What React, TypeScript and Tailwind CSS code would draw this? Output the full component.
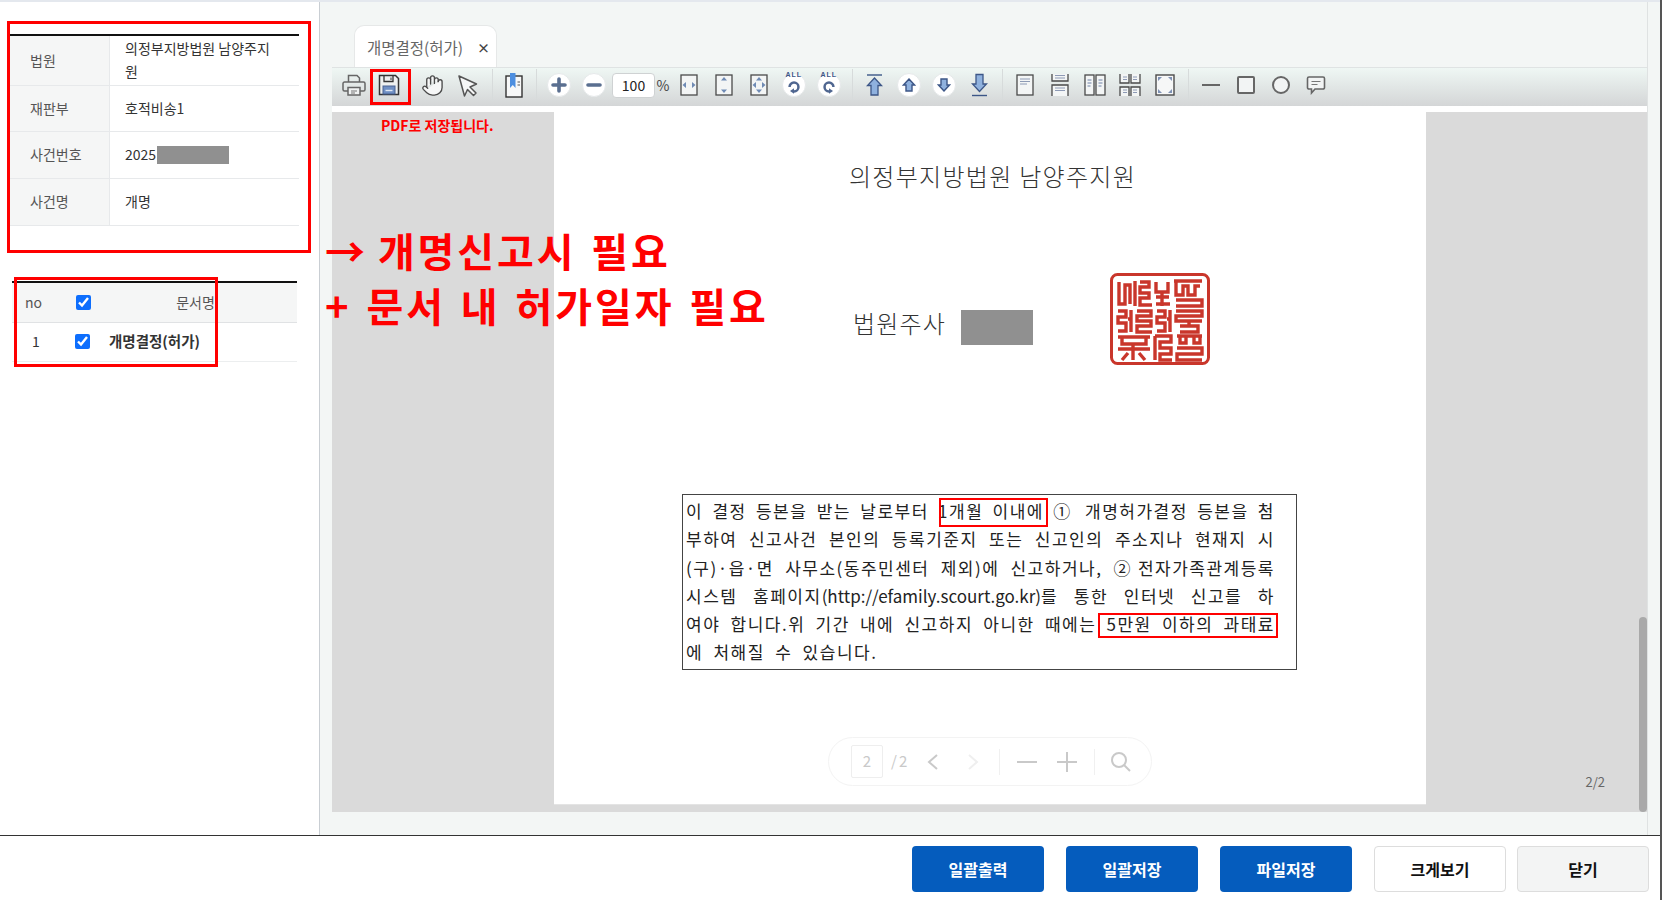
import { Hand } from "lucide-react"
import type { ReactNode } from "react"

const ink = "#4a4a4a"
const blue = "#8fb1de"
const navy = "#3c5687"

function Cell({ children, className = "" }: { children: ReactNode; className?: string }) {
  return <div className={`w-[35px] h-full flex items-center justify-center shrink-0 ${className}`}>{children}</div>
}

function Sep({ className = "" }: { className?: string }) {
  return <div className={`w-px h-[32px] bg-[#d7dbdb] shrink-0 ${className}`} />
}

function Round({ children }: { children: ReactNode }) {
  return (
    <div className="w-[24px] h-[24px] rounded-full bg-white border border-[#e6e9ea] flex items-center justify-center">
      {children}
    </div>
  )
}

function Svg({ children, w = 24, h = 24 }: { children: ReactNode; w?: number; h?: number }) {
  return (
    <svg width={w} height={h} viewBox={`0 0 ${w} ${h}`} fill="none">
      {children}
    </svg>
  )
}

function PrinterIcon() {
  return (
    <Svg>
      <path d="M6.5 9V2.5h8.5l2.5 2.5V9" stroke="#666" strokeWidth="1.5" />
      <path d="M6 18H2.5a1.5 1.5 0 0 1-1.5-1.5v-6A1.5 1.5 0 0 1 2.5 9h19a1.5 1.5 0 0 1 1.5 1.5v6a1.5 1.5 0 0 1-1.5 1.5H18" stroke="#666" strokeWidth="1.5" />
      <path d="M6 14.5h12v7.5H6z" stroke="#666" strokeWidth="1.5" fill="#f0f2f2" />
      <path d="M9 18h6M9 20h4" stroke="#777" />
    </Svg>
  )
}

function SaveIcon() {
  return (
    <Svg>
      <path d="M2.5 2.5h16l3 3v16h-19z" stroke="#333" strokeWidth="1.5" fill="#eef0f0" />
      <path d="M7 3v5.5h9V3" stroke="#333" strokeWidth="1.3" />
      <path d="M14 4.5V7" stroke="#333" />
      <rect x="6" y="13" width="12" height="8" fill="#6f8fc4" stroke="#4a6391" />
      <path d="M8.5 17.5h7" stroke="#dfe7f4" strokeWidth="1.4" />
    </Svg>
  )
}

function PointerIcon() {
  return (
    <Svg>
      <path d="M3 3l17.5 8-6.5 3 6 6-2.5 2.5-6-6-3 6.5z" stroke="#555" strokeWidth="1.5" strokeLinejoin="round" fill="#f6f7f7" />
    </Svg>
  )
}

function BookmarkIcon() {
  return (
    <Svg w={20} h={26}>
      <rect x="2" y="4" width="16" height="21" fill="#f7f8f8" stroke="#333" strokeWidth="1.4" />
      <path d="M6 1h5.5v15L8.8 13 6 16z" fill="#4d8fe0" />
      <path d="M13.5 10h2.5M13.5 13h2.5" stroke="#555" />
    </Svg>
  )
}

function PlusIcon() {
  return (
    <Svg w={16} h={16}>
      <path d="M8 2v12M2 8h12" stroke="#5a6f90" strokeWidth="3.6" strokeLinecap="round" />
    </Svg>
  )
}

function MinusIcon() {
  return (
    <Svg w={16} h={16}>
      <path d="M2 8h12" stroke="#5a6f90" strokeWidth="3.6" strokeLinecap="round" />
    </Svg>
  )
}

function Frame({ children }: { children?: ReactNode }) {
  return (
    <Svg w={18} h={22}>
      <rect x="1" y="1" width="16" height="20" fill="#f3f5f5" stroke={ink} strokeWidth="1.3" />
      {children}
    </Svg>
  )
}

function ArrowH() {
  return <path d="M2.5 11l3.5-3v6zM15.5 11l-3.5-3v6z" fill="#6f8bb5" />
}

function ArrowV() {
  return <path d="M9 3l-3 3.5h6zM9 19l-3-3.5h6z" fill="#6f8bb5" />
}

function AllRotate({ flip }: { flip?: boolean }) {
  return (
    <div className="relative">
      <Round>
        <svg width="16" height="16" viewBox="0 0 18 18" fill="none" className={flip ? "-scale-x-100 mt-[3px]" : "mt-[3px]"}>
          <path d="M4 9a5 5 0 1 1 5 5" stroke="#4f6690" strokeWidth="2.8" />
          <path d="M9 10.5v6l-4.5-3z" fill="#4f6690" />
        </svg>
      </Round>
      <span className="absolute -top-[2px] left-[4px] text-[7px] leading-[8px] font-bold tracking-[1px] text-[#3c5687] font-['Liberation_Sans',sans-serif]">
        ALL
      </span>
    </div>
  )
}

function ArrowFirst() {
  return (
    <Svg>
      <path d="M5 2h15" stroke={navy} strokeWidth="1.4" />
      <path d="M12.5 5l7 7.5h-3.5v9.5H9v-9.5H5.5z" fill={blue} stroke={navy} strokeWidth="1.3" />
    </Svg>
  )
}

function ArrowLast() {
  return (
    <Svg>
      <path d="M5 22.5h15" stroke={navy} strokeWidth="1.4" />
      <path d="M9 1.5h7V11h3.5l-7 7.5-7-7.5H9z" fill={blue} stroke={navy} strokeWidth="1.3" />
    </Svg>
  )
}

function ArrowUp() {
  return (
    <Svg w={14} h={14}>
      <path d="M7 1l5.5 6H10v6H4V7H1.5z" fill={blue} stroke={navy} strokeWidth="1.4" />
    </Svg>
  )
}

function ArrowDown() {
  return (
    <Svg w={14} h={14}>
      <path d="M4 1h6v6h2.5L7 13 1.5 7H4z" fill={blue} stroke={navy} strokeWidth="1.4" />
    </Svg>
  )
}

function TextLines({ x, y, w }: { x: number; y: number; w: number }) {
  return (
    <path
      d={`M${x} ${y}h${w}M${x} ${y + 2.5}h${w}M${x} ${y + 5}h${w * 0.7}`}
      stroke="#8d9ab5"
      strokeWidth="1"
    />
  )
}

function SinglePage() {
  return (
    <Frame>
      <TextLines x={4} y={5} w={10} />
    </Frame>
  )
}

function ContinuousPage() {
  return (
    <Svg w={20} h={24}>
      <path d="M2 1v7h16V1" stroke={ink} strokeWidth="1.3" fill="#f3f5f5" />
      <path d="M2 23v-11h16v11" stroke={ink} strokeWidth="1.3" fill="#f3f5f5" />
      <path d="M5 2.5h10M5 5h10M5 15h10M5 17.5h10" stroke="#8d9ab5" />
    </Svg>
  )
}

function TwoPages() {
  return (
    <Svg w={22} h={22}>
      <rect x="1" y="1" width="9" height="20" fill="#f3f5f5" stroke={ink} strokeWidth="1.3" />
      <rect x="12" y="1" width="9" height="20" fill="#f3f5f5" stroke={ink} strokeWidth="1.3" />
      <path d="M3.5 6h4M3.5 9h4M3.5 12h3M14.5 6h4M14.5 9h4M14.5 12h3" stroke="#6f82a8" />
    </Svg>
  )
}

function FourPages() {
  return (
    <Svg w={24} h={24}>
      <path d="M2 1v9h9V1M13 1v9h9V1" stroke={ink} strokeWidth="1.3" fill="#f3f5f5" />
      <path d="M2 23v-9h9v9M13 23v-9h9v9" stroke={ink} strokeWidth="1.3" fill="#f3f5f5" />
      <path d="M5 4h4M5 6.5h4M15 4h4M15 6.5h4M5 17h4M5 19.5h4M15 17h4M15 19.5h4" stroke="#8d9ab5" />
    </Svg>
  )
}

function FullScreen() {
  return (
    <Svg w={20} h={22}>
      <rect x="1" y="1" width="18" height="20" fill="#f6f7f7" stroke={ink} strokeWidth="1.4" />
      <path d="M3 3h4L3 7zM17 3h-4l4 4zM3 19h4l-4-4zM17 19h-4l4-4z" fill="#7e92b5" />
    </Svg>
  )
}

function Toolbar() {
  return (
    <div className="h-[39px] border-t border-[#dfe3e3] bg-gradient-to-b from-[#eff7f4] to-[#d4d6d7] flex items-center pl-[4px] pb-[4px]">
      <Cell><PrinterIcon /></Cell>
      <Cell><SaveIcon /></Cell>
      <Cell className="ml-[9px]"><Hand size={23} strokeWidth={1.4} color="#4a4a4a" fill="#f6f7f7" /></Cell>
      <Cell><PointerIcon /></Cell>
      <Sep className="ml-[7px]" />
      <Cell className="ml-[3px]"><BookmarkIcon /></Cell>
      <Sep className="ml-[5px]" />
      <Cell className="ml-[4px]"><Round><PlusIcon /></Round></Cell>
      <Cell><Round><MinusIcon /></Round></Cell>
      <div className="ml-[1px] w-[43px] h-[25px] rounded-[4px] bg-white border border-[#cfd2d3] text-[14px] text-[#222] flex items-center justify-center">100</div>
      <div className="w-[16px] text-[14px] text-[#444] text-center">%</div>
      <Cell><Frame><ArrowH /></Frame></Cell>
      <Cell><Frame><ArrowV /></Frame></Cell>
      <Cell><Frame><ArrowH /><ArrowV /></Frame></Cell>
      <Cell><AllRotate /></Cell>
      <Cell><AllRotate flip /></Cell>
      <Sep className="ml-[6px]" />
      <Cell className="ml-[3px]"><ArrowFirst /></Cell>
      <Cell><Round><ArrowUp /></Round></Cell>
      <Cell><Round><ArrowDown /></Round></Cell>
      <Cell><ArrowLast /></Cell>
      <Sep className="ml-[6px]" />
      <Cell className="ml-[4px]"><SinglePage /></Cell>
      <Cell><ContinuousPage /></Cell>
      <Cell><TwoPages /></Cell>
      <Cell><FourPages /></Cell>
      <Cell><FullScreen /></Cell>
      <Sep className="ml-[6px]" />
      <Cell className="ml-[4px]">
        <div className="w-[18px] h-[2px] bg-[#666]" />
      </Cell>
      <Cell>
        <div className="w-[18px] h-[18px] rounded-[2px] border-2 border-[#666] bg-[#f2f4f4]" />
      </Cell>
      <Cell>
        <div className="w-[18px] h-[18px] rounded-full border-2 border-[#666] bg-[#f2f4f4]" />
      </Cell>
      <Cell>
        <Svg w={20} h={20}>
          <path d="M3 2h14a1.5 1.5 0 0 1 1.5 1.5v9A1.5 1.5 0 0 1 17 14H9l-3.5 4v-4H3a1.5 1.5 0 0 1-1.5-1.5v-9A1.5 1.5 0 0 1 3 2z" stroke="#666" strokeWidth="1.6" fill="#f2f4f4" />
          <path d="M5.5 6.5h9M5.5 9.5h6" stroke="#777" />
        </Svg>
      </Cell>
    </div>
  )
}

const sealPaths = [
  // top row
  "M9 9v22h6V12h5v19M25 8v25M30 9h9v5h-9v6h9v5h-9v7h12M46 9v10h12V9M46 24h13M52 19v14M46 31h14M64 8h28M66 8v14h7V13h5v9h7V13h5M66 27h26v6H66",
  // middle row
  "M8 38h8v6H8v6h8v8H8M21 37v22M21 46h-3M27 38h14v5H27v5h14v5H27v6h15M47 38h8v6h-8v6h8v8h-8M60 37v22M60 46h-3M66 38h26v5H66v5h26M70 53h18v6H70M79 48v5",
  // bottom row
  "M8 64h32M12 64v7h24v-7M8 76h32M23 71v16M12 87l6-7M35 87l-6-7M45 63v24M45 63h16v6H50v6h11v6H50v6h12M67 63h25M70 63v7h6v-7M84 63v7h6v-7M67 75h25v6H67v6h25",
]

function Seal() {
  return (
    <svg width="100" height="92" viewBox="0 0 100 92" fill="none">
      <rect x="1.5" y="1.5" width="97" height="89" rx="6" stroke="#c9362b" strokeWidth="3" />
      {sealPaths.map((d, i) => (
        <path key={i} d={d} stroke="#c9362b" strokeWidth="3.4" />
      ))}
    </svg>
  )
}

function Pager() {
  return (
    <div className="absolute left-[274px] top-[625px] w-[324px] h-[49px] rounded-full bg-white border border-[#f3f3f3] flex items-center pl-[22px] text-[#c9c9c9]">
      <div className="w-[32px] h-[33px] border border-[#eeeeee] rounded-[2px] flex items-center justify-center text-[15px]">2</div>
      <span className="ml-[8px] w-[20px] text-[15px] tracking-[2px]">/2</span>
      <svg width="16" height="18" viewBox="0 0 16 18" fill="none" className="ml-[14px]">
        <path d="M12 2L4 9l8 7" stroke="#c9c9c9" strokeWidth="2" />
      </svg>
      <svg width="16" height="18" viewBox="0 0 16 18" fill="none" className="ml-[24px]">
        <path d="M4 2l8 7-8 7" stroke="#efefef" strokeWidth="2" />
      </svg>
      <div className="ml-[18px] w-px h-[26px] bg-[#f0f0f0]" />
      <div className="ml-[17px] w-[20px] h-[2px] bg-[#c9c9c9]" />
      <svg width="20" height="20" viewBox="0 0 20 20" fill="none" className="ml-[20px]">
        <path d="M10 0v20M0 10h20" stroke="#c9c9c9" strokeWidth="2" />
      </svg>
      <div className="ml-[17px] w-px h-[26px] bg-[#f0f0f0]" />
      <svg width="22" height="22" viewBox="0 0 22 22" fill="none" className="ml-[15px]">
        <circle cx="9" cy="9" r="7" stroke="#c9c9c9" strokeWidth="2" />
        <path d="M14 14l6 6" stroke="#c9c9c9" strokeWidth="2" />
      </svg>
    </div>
  )
}

function NoticeLine({ children }: { children: ReactNode }) {
  return <div className="text-justify [text-align-last:justify] whitespace-nowrap tracking-[1.5px]">{children}</div>
}

function DocumentPage() {
  return (
    <div className="relative w-[872px] h-[693px] shrink-0 bg-white border-b border-[#e4e4e4]">
      <div className="pt-[48px] pl-[5px] text-center text-[24px] leading-[32px] tracking-[1.3px] text-[#333] font-light">
        의정부지방법원 남양주지원
      </div>
      <div className="mt-[81px] pl-[299px] flex items-start">
        <div className="mt-[34px] w-[108px] text-[24px] leading-[32px] tracking-[1.2px] text-[#333] font-light">법원주사</div>
        <div className="mt-[37px] w-[72px] h-[35px] bg-[#909090]" />
        <div className="ml-[77px]"><Seal /></div>
      </div>
      <div className="relative mt-[129px] ml-[128px] w-[615px] h-[176px] border border-[#444] pl-[3px] pr-[21px] pt-[2px] text-[17px] leading-[28.3px] text-[#222]">
        <NoticeLine>이 결정 등본을 받는 날로부터 1개월 이내에 ① 개명허가결정 등본을 첨</NoticeLine>
        <NoticeLine>부하여 신고사건 본인의 등록기준지 또는 신고인의 주소지나 현재지 시</NoticeLine>
        <NoticeLine>(구)·읍·면 사무소(동주민센터 제외)에 신고하거나, ②전자가족관계등록</NoticeLine>
        <NoticeLine>
          시스템 홈페이지<span className="tracking-normal">(http://efamily.scourt.go.kr)</span>를 통한 인터넷 신고를 하
        </NoticeLine>
        <NoticeLine>여야 합니다.위 기간 내에 신고하지 아니한 때에는 5만원 이하의 과태료</NoticeLine>
        <div className="[word-spacing:5px] tracking-[1.5px]">에 처해질 수 있습니다.</div>
        <div className="absolute left-[256px] top-[3px] w-[109px] h-[29px] border-2 border-[#ff0000]" />
        <div className="absolute left-[415px] top-[118px] w-[180px] h-[25px] border-2 border-[#ff0000]" />
      </div>
      <Pager />
    </div>
  )
}

function InfoRow({ label, children, h }: { label: string; children: ReactNode; h: string }) {
  return (
    <div className={`flex border-b border-[#e7e9eb] ${h}`}>
      <div className="w-[100px] shrink-0 bg-[#f5f6f6] border-r border-[#e7e9eb] pl-[20px] pb-[1px] flex items-center text-[14px] text-[#555]">
        {label}
      </div>
      <div className="flex-1 pl-[15px] pr-[22px] pb-[1px] flex items-center text-[14px] leading-[23px] text-[#333] break-all">
        {children}
      </div>
    </div>
  )
}

function Sidebar() {
  return (
    <aside className="w-[320px] shrink-0 bg-white border-r border-[#c9ced3] pt-[32px]">
      <div className="ml-[10px] w-[289px] border-t-2 border-[#111]">
        <InfoRow label="법원" h="h-[50px]">의정부지방법원 남양주지원</InfoRow>
        <InfoRow label="재판부" h="h-[46px]">호적비송1</InfoRow>
        <InfoRow label="사건번호" h="h-[47px]">
          <span className="flex items-center whitespace-nowrap">
            2025<span className="ml-[1px] w-[72px] h-[18px] bg-[#909090]" />
          </span>
        </InfoRow>
        <InfoRow label="사건명" h="h-[47px]">개명</InfoRow>
      </div>
      <div className="mt-[55px] ml-[12px] w-[285px] border-t-2 border-[#111] text-[14px]">
        <div className="h-[40px] flex items-center bg-[#f5f6f6] border-b border-[#e0e2e4] text-[#555]">
          <div className="w-[43px] text-center">no</div>
          <div className="w-[55px] flex justify-center pl-[2px]">
            <input type="checkbox" defaultChecked className="w-[15px] h-[15px] accent-[#0d6efd]" />
          </div>
          <div className="flex-1 text-center pr-[16px]">문서명</div>
        </div>
        <div className="h-[39px] pb-[2px] flex items-center border-b border-[#eceeef] text-[#333]">
          <div className="w-[48px] text-center">1</div>
          <div className="w-[44px] flex justify-center">
            <input type="checkbox" defaultChecked className="w-[15px] h-[15px] accent-[#0d6efd]" />
          </div>
          <div className="ml-[5px] font-bold text-[14.5px]">개명결정(허가)</div>
        </div>
      </div>
    </aside>
  )
}

function Viewer() {
  return (
    <main className="flex-1 min-w-0 bg-[#f3f6f5] pl-[12px] flex flex-col">
      <div className="border-r border-[#dfe2e2] mr-[12px] flex-1 flex flex-col">
        <div className="pt-[23px] pl-[22px]">
          <div className="w-[143px] h-[42px] rounded-t-[10px] bg-white border border-b-0 border-[#e6e8e8] flex items-center pl-[12px] pt-[3px] text-[15.5px] text-[#666]">
            개명결정(허가)
            <span className="ml-[14px] text-[13px] font-bold text-[#444]">×</span>
          </div>
        </div>
        <Toolbar />
        <div className="h-[6px] bg-white" />
        <div className="h-[700px] bg-[#dadada] flex items-start pl-[222px]">
          <DocumentPage />
          <div className="flex-1 h-full flex justify-end items-end pb-[21px] pr-[34px] text-[13px] text-[#666]">2/2</div>
          <div className="w-[8px] h-[195px] self-end bg-[#a9a9a9] rounded-[4px]" />
        </div>
      </div>
    </main>
  )
}

function FooterButton({ label, tone, className = "" }: { label: string; tone: "blue" | "white" | "gray"; className?: string }) {
  const tones = {
    blue: "bg-[#055cbd] text-white",
    white: "bg-white text-[#111] border border-[#dddddd]",
    gray: "bg-[#f3f4f4] text-[#111] border border-[#dddddd]",
  }
  return (
    <button className={`w-[132px] h-[46px] rounded-[4px] text-[16px] font-bold ${tones[tone]} ${className}`}>
      {label}
    </button>
  )
}

export default function App() {
  return (
    <div className="relative w-full h-screen flex overflow-hidden bg-white font-['Noto_Sans_CJK_KR','Noto_Sans',sans-serif]">
      <div className="flex-1 min-w-0 flex flex-col">
        <div className="h-[835px] flex border-t-2 border-[#e4e8ee]">
          <Sidebar />
          <Viewer />
        </div>
        <footer className="h-[65px] border-t border-[#333] flex justify-end items-start pt-[10px] pr-[11px]">
          <FooterButton label="일괄출력" tone="blue" />
          <FooterButton label="일괄저장" tone="blue" className="ml-[22px]" />
          <FooterButton label="파일저장" tone="blue" className="ml-[22px]" />
          <FooterButton label="크게보기" tone="white" className="ml-[22px]" />
          <FooterButton label="닫기" tone="gray" className="ml-[11px]" />
        </footer>
      </div>
      <div className="w-[2px] shrink-0 bg-[#555]" />

      {/* annotations drawn over the capture */}
      <div className="absolute left-[7px] top-[21px] w-[304px] h-[232px] border-[3px] border-[#ff0000]" />
      <div className="absolute left-[14px] top-[277px] w-[204px] h-[90px] border-[3px] border-[#ff0000]" />
      <div className="absolute left-[370px] top-[69px] w-[41px] h-[36px] border-[3px] border-[#ff0000]" />
      <div className="absolute left-[381px] top-[116px] text-[14px] leading-[18px] font-bold text-[#ff0000]">PDF로 저장됩니다.</div>
      <div className="absolute left-[325px] top-[223px] text-[40px] leading-[55px] font-bold tracking-[2.9px] [word-spacing:3px] text-[#ff0000] whitespace-pre">
        <div><span className="[word-spacing:-2px]">→ </span>개명신고시 필요</div>
        <div>+ 문서 내 허가일자 필요</div>
      </div>
    </div>
  )
}
